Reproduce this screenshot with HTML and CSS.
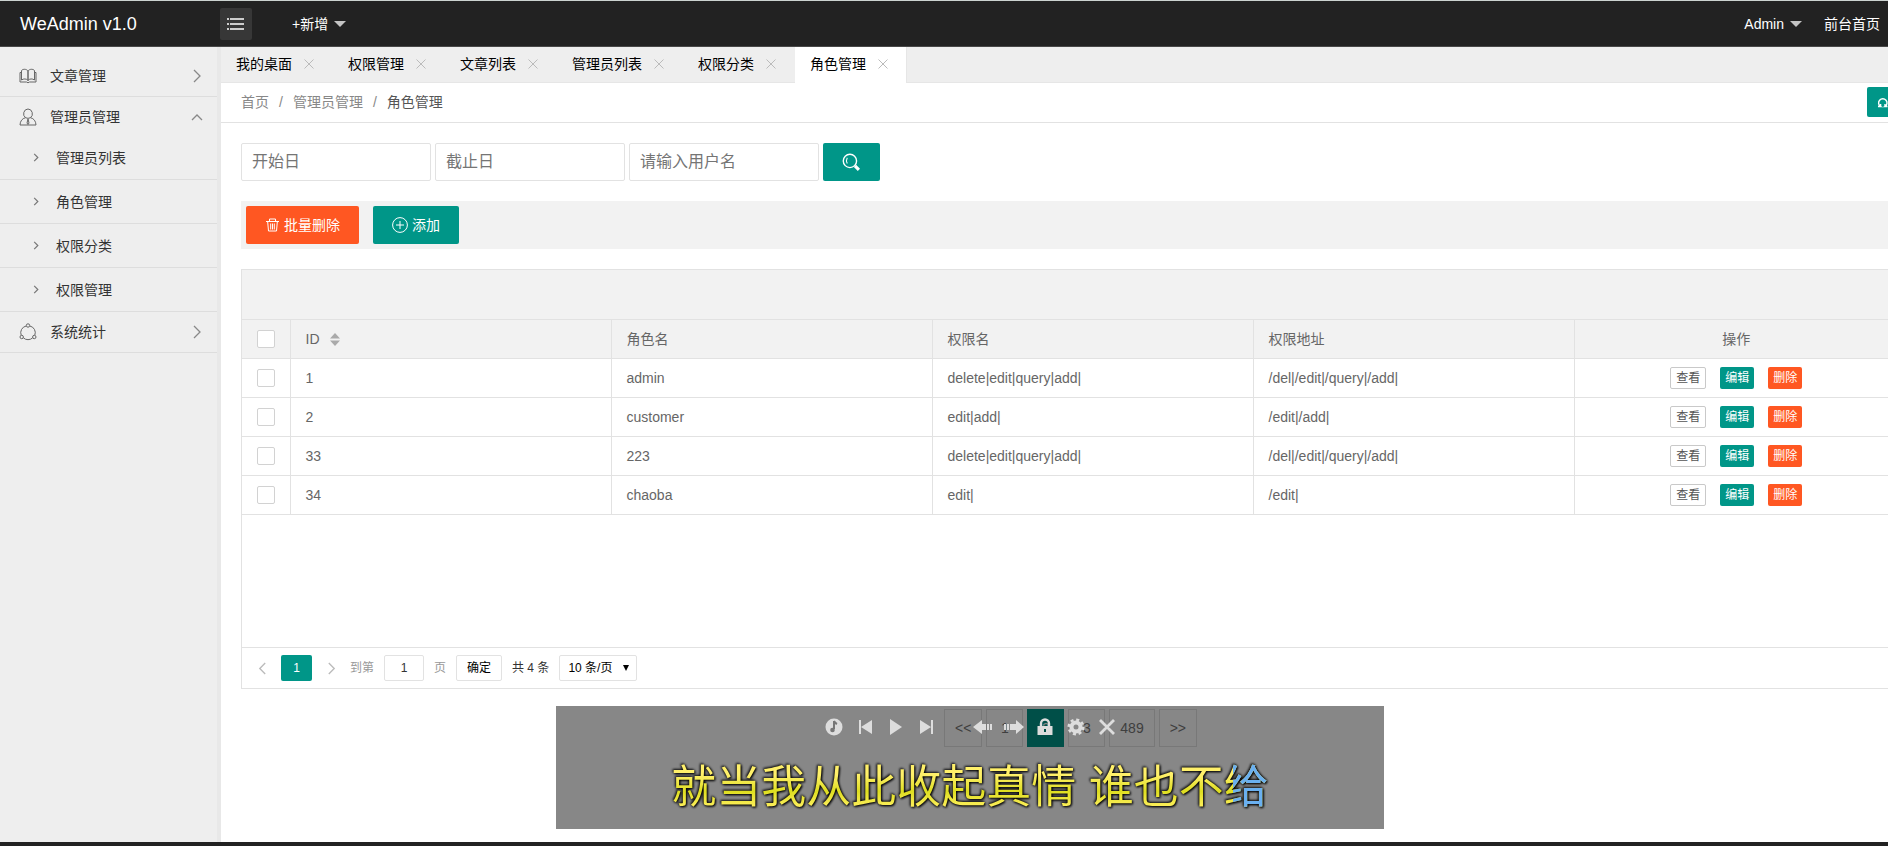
FILE: index.html
```html
<!DOCTYPE html>
<html lang="zh-CN">
<head>
<meta charset="utf-8">
<title>WeAdmin v1.0</title>
<link rel="stylesheet" href="styles.css">
</head>
<body>
<svg class="defs" aria-hidden="true">
  <symbol id="right" viewBox="0 0 10 14"><path d="M2 1l6 6-6 6"/></symbol>
  <symbol id="close" viewBox="0 0 10 10"><path d="M0.5 0.5l9 9M9.5 0.5l-9 9"/></symbol>
</svg>
<div class="shell">
  <header class="topbar">
    <a class="logo" href="#">WeAdmin v1.0</a>
    <button class="toggle" aria-label="菜单"><svg width="18" height="12" viewBox="0 0 18 12"><path d="M0 1h2M3 1h14M0 6h2M3 6h14M0 11h2M3 11h14" stroke="#fff" stroke-width="1.3"/></svg></button>
    <a class="toplink add" href="#">+新增<i class="caret"></i></a>
    <nav class="account"><a class="toplink" href="#">Admin<i class="caret"></i></a><a class="toplink" href="#">前台首页</a></nav>
  </header>
  <div class="body">
    <aside class="side">
      <nav>
        <a class="item" href="#"><svg width="18" height="16" viewBox="0 0 18 16"><path d="M9 3C7.500.8 4 .8 2.500 2.500V12C4.500 10.500 7.500 10.500 9 12.500M9 3c1.500-2.200 5-2.200 6.500-.5V12c-2-1.500-5-1.500-6.500.5zM9 3v9.500M2.500 4.500H1V14h6.500l1.500.8 1.500-.8H17V4.500h-1.500"/></svg><span>文章管理</span><svg class="arrow" width="12" height="14"><use href="#right"/></svg></a>
        <a class="item open" href="#"><svg width="18" height="18" viewBox="0 0 18 18"><path d="M9 1a4.500 4.800 0 0 1 2.500 8.700C14.800 10.500 16.800 13 17 17H1c.2-4 2.200-6.500 5.500-7.300A4.500 4.800 0 0 1 9 1zM6.500 9.700Q9 11 11.500 9.700M9 11l-1 4 1 1.500 1-1.500z"/></svg><span>管理员管理</span><svg class="arrow" width="12" height="8" viewBox="0 0 12 8"><path d="M1 7l5-5 5 5"/></svg></a>
        <a class="sub" href="#"><svg width="6" height="9"><use href="#right"/></svg><span>管理员列表</span></a>
        <a class="sub" href="#"><svg width="6" height="9"><use href="#right"/></svg><span>角色管理</span></a>
        <a class="sub" href="#"><svg width="6" height="9"><use href="#right"/></svg><span>权限分类</span></a>
        <a class="sub" href="#"><svg width="6" height="9"><use href="#right"/></svg><span>权限管理</span></a>
        <a class="item" href="#"><svg width="18" height="18" viewBox="0 0 18 18"><circle cx="9" cy="2.500" r="1.700"/><circle cx="2.700" cy="14" r="1.700"/><circle cx="15.300" cy="14" r="1.700"/><path d="M7.200 3A6.800 6.800 0 0 0 2.200 12.200M10.800 3a6.800 6.800 0 0 1 5 9.200M4.300 14.800a6.800 6.800 0 0 0 9.400 0"/></svg><span>系统统计</span><svg class="arrow" width="12" height="14"><use href="#right"/></svg></a>
      </nav>
    </aside>
    <main class="main">
      <nav class="tabs">
        <a class="tab" href="#">我的桌面<svg><use href="#close"/></svg></a>
        <a class="tab" href="#">权限管理<svg><use href="#close"/></svg></a>
        <a class="tab" href="#">文章列表<svg><use href="#close"/></svg></a>
        <a class="tab" href="#">管理员列表<svg><use href="#close"/></svg></a>
        <a class="tab" href="#">权限分类<svg><use href="#close"/></svg></a>
        <a class="tab active" href="#">角色管理<svg><use href="#close"/></svg></a>
      </nav>
      <div class="crumbs">
        <a href="#">首页</a><span>/</span><a href="#">管理员管理</a><span>/</span><a class="here" href="#">角色管理</a>
        <button class="refresh" aria-label="刷新"><svg width="12" height="12" viewBox="0 0 12 12"><path d="M1 9.500h2.600A4.200 4.200 0 1 1 8 9.500h2.500M3.600 7v2.500M8 7v2.500" fill="none" stroke="#fff" stroke-width="1.400"/></svg></button>
      </div>
      <div class="content">
        <form class="search">
          <input type="text" placeholder="开始日" aria-label="开始日">
          <input type="text" placeholder="截止日" aria-label="截止日">
          <input type="text" placeholder="请输入用户名" aria-label="用户名">
          <button class="btn" type="button" aria-label="搜索"><svg width="19" height="19" viewBox="0 0 18 18"><circle cx="7.500" cy="7.500" r="6.300" stroke-width="1.300"/><path d="M5 4.500Q3.500 7 5 10"/><path d="M12.300 12.300l3.700 3.700" stroke-width="3"/></svg></button>
        </form>
        <div class="actions">
          <button class="btn danger"><svg width="15" height="14" viewBox="0 0 14 14"><path d="M.5 3.500h13M4 3V1h6v2M2.200 4l.8 9h8l.8-9M5.200 5.500v6M7 5.500v6M8.800 5.500v6"/></svg>批量删除</button>
          <button class="btn"><svg width="16" height="16" viewBox="0 0 16 16"><circle cx="8" cy="8" r="7.400"/><path d="M8 4v8M4 8h8"/></svg>添加</button>
        </div>
        <section class="grid">
          <div class="gridtool"></div>
          <div class="gridbody">
          <table>
            <colgroup><col class="c-check"><col class="c-data"><col class="c-data"><col class="c-data"><col class="c-data"><col></colgroup>
            <thead><tr><th class="ck"><input type="checkbox" aria-label="全选"></th><th>ID<svg class="sort" width="10" height="13" viewBox="0 0 10 13"><path d="M0 5.500L5 0l5 5.500zM0 7.500L5 13l5-5.500z"/></svg></th><th>角色名</th><th>权限名</th><th>权限地址</th><th class="ops">操作</th></tr></thead>
            <tbody>
              <tr><td class="ck"><input type="checkbox" aria-label="选择 1"></td><td>1</td><td>admin</td><td>delete|edit|query|add|</td><td>/del|/edit|/query|/add|</td><td class="ops"><div><button class="mini plain">查看</button><button class="mini">编辑</button><button class="mini danger">删除</button></div></td></tr>
              <tr><td class="ck"><input type="checkbox" aria-label="选择 2"></td><td>2</td><td>customer</td><td>edit|add|</td><td>/edit|/add|</td><td class="ops"><div><button class="mini plain">查看</button><button class="mini">编辑</button><button class="mini danger">删除</button></div></td></tr>
              <tr><td class="ck"><input type="checkbox" aria-label="选择 33"></td><td>33</td><td>223</td><td>delete|edit|query|add|</td><td>/del|/edit|/query|/add|</td><td class="ops"><div><button class="mini plain">查看</button><button class="mini">编辑</button><button class="mini danger">删除</button></div></td></tr>
              <tr><td class="ck"><input type="checkbox" aria-label="选择 34"></td><td>34</td><td>chaoba</td><td>edit|</td><td>/edit|</td><td class="ops"><div><button class="mini plain">查看</button><button class="mini">编辑</button><button class="mini danger">删除</button></div></td></tr>
            </tbody>
          </table>
          </div>
          <div class="gridpage">
            <button class="step" aria-label="上一页"><svg class="flip" width="9" height="13"><use href="#right"/></svg></button>
            <button class="num">1</button>
            <button class="step" aria-label="下一页"><svg width="9" height="13"><use href="#right"/></svg></button>
            <label for="pg">到第</label><input id="pg" type="text" value="1"><span class="muted">页</span>
            <button class="go">确定</button>
            <span>共 4 条</span>
            <span class="pick"><select aria-label="每页条数"><option>10 条/页</option></select></span>
          </div>
        </section>
        <nav class="pager">
          <a href="#">&lt;&lt;</a><a href="#">1</a><a class="cur" href="#">2</a><a href="#">3</a><a href="#">489</a><a href="#">&gt;&gt;</a>
        </nav>
      </div>
    </main>
  </div>
  <footer class="foot"></footer>
</div>
<section class="player">
  <div class="controls">
    <button aria-label="音乐"><svg width="20" height="20" viewBox="0 0 20 20"><circle cx="10" cy="10" r="8.500"/><path d="M10 4v8M10 4q1 2 3 3" fill="none" stroke="#777" stroke-width="2"/><circle cx="8.500" cy="13" r="2.300" fill="#777"/></svg></button>
    <button aria-label="上一首"><svg width="20" height="20" viewBox="0 0 20 20"><path d="M4 3h2v14H4zM17 3v14L6 10z"/></svg></button>
    <button aria-label="播放"><svg width="20" height="20" viewBox="0 0 20 20"><path d="M4 2l12 8-12 8z"/></svg></button>
    <button aria-label="下一首"><svg width="20" height="20" viewBox="0 0 20 20"><path d="M14 3h2v14h-2zM3 3v14l11-7z"/></svg></button>
    <button class="after" aria-label="后退"><svg width="20" height="20" viewBox="0 0 20 20"><path d="M0 10l9-7v4h4v6H9v4zM14 7h2v6h-2zM17 7h2v6h-2z"/></svg></button>
    <button aria-label="前进"><svg width="20" height="20" viewBox="0 0 20 20"><path d="M20 10l-8-7v4H6v6h6v4zM3 7h2v6H3zM0 7h2v6H0z"/></svg></button>
    <button aria-label="锁定"><svg width="20" height="20" viewBox="0 0 20 20"><path d="M2.500 9h15v9h-15z"/><path d="M6 10V6.500a4 4 0 0 1 8 0V10" fill="none" stroke="#ddd" stroke-width="2.400"/><path d="M9 12h2v3H9z" fill="#005048"/></svg></button>
    <button aria-label="设置"><svg width="20" height="20" viewBox="0 0 20 20"><circle cx="10" cy="10" r="4.500" fill="none" stroke="#ddd" stroke-width="4"/><circle cx="10" cy="10" r="7.300" fill="none" stroke="#ddd" stroke-width="2.500" stroke-dasharray="3 2.730"/></svg></button>
    <button aria-label="关闭"><svg width="20" height="20" viewBox="0 0 20 20"><path d="M3 3l14 14M17 3L3 17" stroke="#ddd" stroke-width="2.800"/></svg></button>
  </div>
  <p class="lyric">就当我从此收起真情 谁也不给</p>
</section>
</body>
</html>
```

FILE: styles.css
```css
* { box-sizing: border-box; }
body, button, input, select {
  font: 14px/20px "Liberation Sans", "Noto Sans CJK SC", sans-serif;
}
body { margin: 0; color: #333; overflow: hidden; }
a { color: inherit; text-decoration: none; }
button { border: 0; padding: 0; background: none; color: inherit; }
svg { flex: none; fill: none; stroke: currentColor; }
.defs { position: absolute; width: 0; height: 0; }
.shell { display: flex; flex-direction: column; height: 100vh; }

.topbar {
  display: flex; align-items: center; height: 47px; flex: none;
  background: #222; color: #fff; border-top: 1px solid #ccd3d0; border-bottom: 1px solid #484848;
}
.logo { width: 200px; margin-left: 20px; font-size: 18px; }
.toggle { display: flex; align-items: center; justify-content: center; width: 32px; height: 32px; border-radius: 2px; background: #373737; }
.toplink { display: flex; align-items: center; }
.add { margin-left: 40px; }
.caret { margin-left: 6px; border: 6px solid transparent; border-top-color: #c4c4c4; border-bottom: 0; }
.account { display: flex; gap: 22px; margin-left: auto; padding-right: 8px; }

.body { display: flex; flex: 1; min-height: 0; }
.side { width: 221px; flex: none; padding-top: 9px; background: #eee; border-right: 4px solid #e8e8e8; }
.item, .sub { display: flex; align-items: center; border-bottom: 1px solid #ddd; }
.item { height: 41px; padding: 0 14px 0 19px; gap: 13px; }
.item > svg { stroke: #666; }
.open { height: 39px; border-bottom: 0; }
.item .arrow { margin-left: auto; stroke: #888; stroke-width: 1.3; }
.sub { height: 44px; padding-left: 33px; gap: 17px; }
.sub svg { stroke: #777; stroke-width: 2; }

.main { display: flex; flex-direction: column; flex: 1; min-width: 0; overflow: hidden; background: #fff; }
.tabs { display: flex; height: 36px; flex: none; background: #eee; border-bottom: 1px solid #e6e6e6; color: #000; }
.tab { display: flex; align-items: center; gap: 12px; padding: 0 18px 1px 15px; border-right: 1px solid transparent; }
.tab svg { width: 10px; height: 10px; stroke: #bbb; }
.active { height: 36px; padding-bottom: 2px; background: #fff; border-color: #e6e6e6; }
.crumbs { display: flex; align-items: center; height: 40px; flex: none; margin-right: -12px; padding: 0 0 2px 20px; border-bottom: 1px solid #e2e2e2; color: #888; }
.crumbs span { margin: 0 10px; }
.here { color: #555; }
.refresh { width: 33px; height: 30px; margin-left: auto; padding: 2px 0 0 10px; border-radius: 2px; background: #009688; text-align: left; }
.refresh svg { display: block; }
.content { margin-right: -12px; padding: 20px 0 0 20px; }

.search { display: flex; gap: 4px; }
.search input { width: 190px; height: 38px; padding: 0 10px; border: 1px solid #e2e2e2; border-radius: 2px; font-size: 16px; }
.search input::placeholder { color: #757575; }
.btn { display: flex; align-items: center; justify-content: center; gap: 4px; height: 38px; padding: 0 19px; border-radius: 2px; background: #009688; color: #fff; }
.danger { background: #ff5722; }
.actions { display: flex; gap: 14px; margin: 20px 0; padding: 5px; background: #f2f2f2; }

.grid { border: 1px solid #e2e2e2; }
.gridtool { height: 50px; background: #f2f2f2; border-bottom: 1px solid #e2e2e2; }
.gridbody { height: 327px; }
table { width: 100%; table-layout: fixed; border-collapse: collapse; color: #666; }
.c-check { width: 48px; }
.c-data { width: 321px; }
th { background: #f2f2f2; font-weight: 400; text-align: left; }
th, td { height: 39px; padding: 0 15px; border-right: 1px solid #e2e2e2; border-bottom: 1px solid #e2e2e2; }
th { height: 38px; }
.ck { padding: 0; text-align: center; }
.ck input { appearance: none; display: block; width: 18px; height: 18px; margin: 0 auto; border: 1px solid #d2d2d2; border-radius: 2px; background: #fff; }
.sort { margin-left: 10px; vertical-align: -2px; fill: #aaa; stroke: none; }
.ops { text-align: center; }
.ops div { display: flex; justify-content: center; gap: 14px; }
.mini { height: 22px; padding: 0 5px; border-radius: 2px; background: #009688; color: #fff; font-size: 12px; }
.plain { border: 1px solid #c9c9c9; background: #fff; color: #555; }
.mini.danger { background: #ff5722; }

.gridpage { display: flex; align-items: center; height: 41px; padding-left: 11px; gap: 10px; border-top: 1px solid #e2e2e2; font-size: 12px; }
.gridpage button, .gridpage input, .gridpage select { height: 26px; font-size: 12px; }
.step { width: 18px; color: #bbb; }
.step svg { display: block; margin: 0 auto; stroke-width: 1.5; }
.flip { transform: scaleX(-1); }
.num { width: 31px; border-radius: 2px; background: #009688; }
.gridpage .num { color: #fff; }
.gridpage label, .muted { color: #999; }
.gridpage input { width: 40px; border: 1px solid #e2e2e2; border-radius: 2px; text-align: center; color: #333; }
.gridpage .go { width: 46px; border: 1px solid #e2e2e2; border-radius: 2px; color: #000; }
.pick { position: relative; }
.pick::after { content: ""; position: absolute; right: 8px; top: 10px; border: 3px solid transparent; border-top: 6px solid #000; border-bottom: 0; }
.pick select { appearance: none; width: 78px; padding: 0 8px; border: 1px solid #e2e2e2; border-radius: 2px; background: #fff; color: #000; }

.pager { display: flex; justify-content: center; gap: 4px; margin-top: 20px; color: #777; }
.pager a { min-width: 37px; height: 38px; padding: 8px 10px; border: 1px solid #e2e2e2; text-align: center; }
.pager .cur { border-color: #009688; background: #009688; color: #fff; }

.foot { height: 4px; flex: none; background: #222; }
.player { position: fixed; left: 556px; right: 504px; bottom: 17px; height: 123px; background: rgba(0, 0, 0, .47); }
.controls { display: flex; justify-content: center; gap: 11px; padding-top: 11px; }
.controls button { width: 20px; height: 20px; }
.controls svg { display: block; fill: #ddd; stroke: none; }
.controls .after { margin-left: 25px; }
.lyric {
  width: max-content; margin: 18px auto 0; font-size: 45px; line-height: 66px; color: transparent;
  background: linear-gradient(90deg, transparent 94%, #6ab0f0 94%), linear-gradient(#fff06a 30%, #dede20 55%, #fff060 80%);
  background-clip: text; -webkit-background-clip: text;
  filter: drop-shadow(1px 1px 1px #000) drop-shadow(-1px -1px 1px #111);
}
```
